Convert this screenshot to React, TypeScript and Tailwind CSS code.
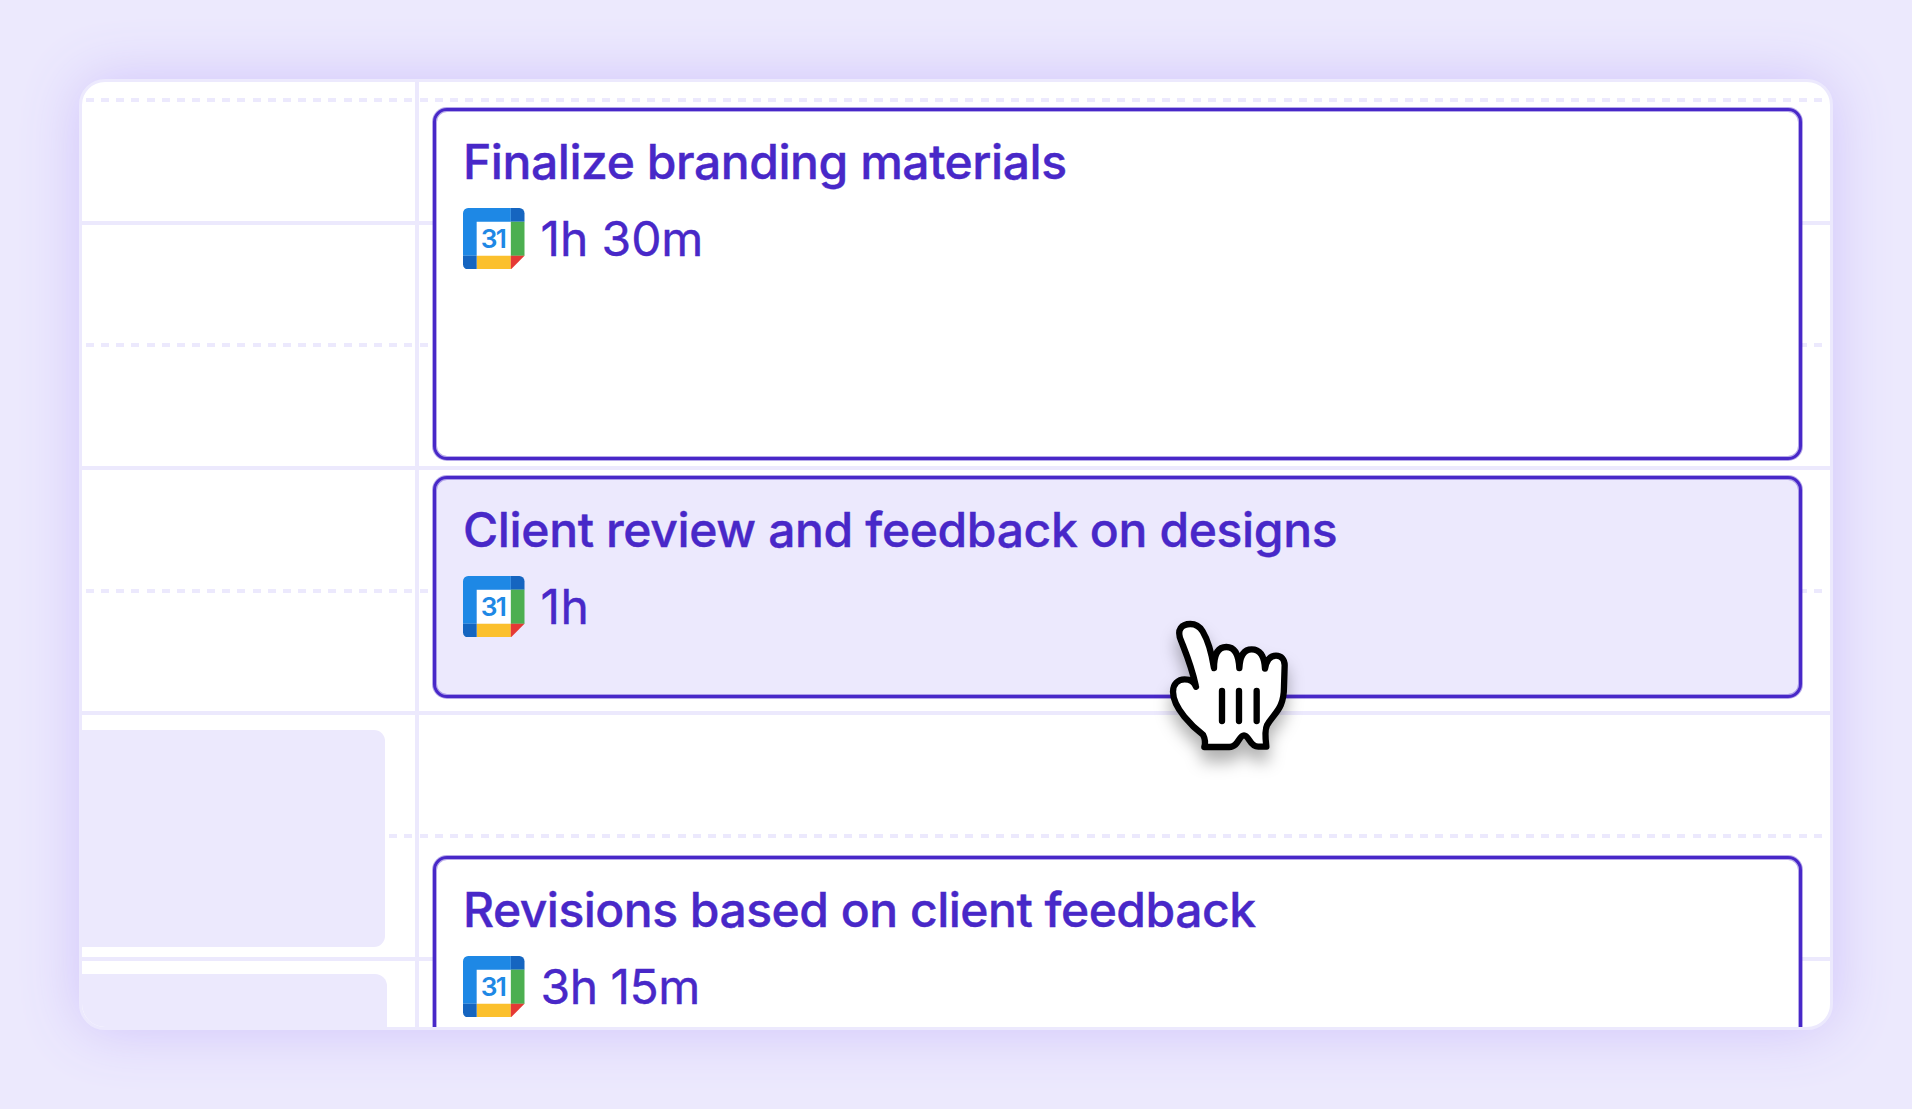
import clsx from "clsx";

type CalendarEvent = {
  title: string;
  duration: string;
  hovered?: boolean;
  box: string;
  tracking: string;
  durationTracking: string;
};

const events: CalendarEvent[] = [
  {
    title: "Finalize branding materials",
    duration: "1h 30m",
    box: "mt-[26px] h-[352px]",
    tracking: "tracking-[-0.44px]",
    durationTracking: "tracking-[-0.1px]",
  },
  {
    title: "Client review and feedback on designs",
    duration: "1h",
    hovered: true,
    box: "mt-[16px] h-[222px]",
    tracking: "tracking-[-0.36px]",
    durationTracking: "tracking-[0.5px]",
  },
  {
    title: "Revisions based on client feedback",
    duration: "3h 15m",
    box: "mt-[158px] h-[300px]",
    tracking: "tracking-[-0.5px]",
    durationTracking: "tracking-[-0.5px]",
  },
];

// Half-hour marks are dashed, full hours are solid
const slots = ["half", "hour", "half", "hour", "half", "hour", "half", "hour"];

function SlotLines({ inset }: { inset: string }) {
  return (
    <div className="[grid-area:1/1] flex flex-col pt-4">
      {slots.map((slot, i) => (
        <div key={i} className="h-[122.7px] shrink-0">
          {slot === "hour" ? (
            <div className="h-1 bg-[#ece9fd]" />
          ) : (
            <div
              className={clsx(
                "h-1 bg-[repeating-linear-gradient(90deg,#ece9fd_0_8px,transparent_8px_15.15px)]",
                inset
              )}
            />
          )}
        </div>
      ))}
    </div>
  );
}

function GoogleCalendarIcon() {
  return (
    <svg viewBox="0 0 36 36" className="size-[61.5px] shrink-0">
      <rect x="8" y="8" width="20" height="20" fill="#fff" />
      <path d="M3 0H28V8H8V28H0V3A3 3 0 0 1 3 0Z" fill="#1e88e5" />
      <path d="M28 0H33A3 3 0 0 1 36 3V8H28Z" fill="#1565c0" />
      <path d="M28 8H36V28H28Z" fill="#4caf50" />
      <path d="M8 28H28V36H8Z" fill="#fbc02d" />
      <path d="M28 28H36L28 36Z" fill="#e53935" />
      <path d="M0 28H8V36H3A3 3 0 0 1 0 33Z" fill="#1565c0" />
      <text
        x="17.6"
        y="23.6"
        textAnchor="middle"
        fill="#1e88e5"
        fontFamily="Inter, sans-serif"
        fontWeight="600"
        fontSize="15.4"
        letterSpacing="-0.9"
      >
        31
      </text>
    </svg>
  );
}

function EventCard({ event }: { event: CalendarEvent }) {
  return (
    <div
      className={clsx(
        "shrink-0 rounded-[14px] border-[3px] border-[#4828c8] pt-[21px] pl-[27px] text-[#4828c8]",
        "shadow-[0_0_0_1px_#4828c866,inset_0_0_0_1px_#4828c866]",
        event.hovered ? "bg-[#ece9fd]" : "bg-white",
        event.box
      )}
    >
      <div
        className={clsx(
          "h-[60px] text-[48px] leading-[60px] font-medium whitespace-nowrap [-webkit-text-stroke:0.4px_#4828c8]",
          event.tracking
        )}
      >
        {event.title}
      </div>
      <div className="mt-[15.5px] flex items-center gap-4">
        <GoogleCalendarIcon />
        <span
          className={clsx(
            "pt-px text-[48px] leading-[60px] whitespace-nowrap [-webkit-text-stroke:0.4px_#4828c8]",
            event.durationTracking
          )}
        >
          {event.duration}
        </span>
      </div>
    </div>
  );
}

function HandCursor() {
  return (
    <svg
      viewBox="0 0 540 570"
      className="absolute top-[600px] left-[1140px] z-20 h-[190px] w-[180px] overflow-visible drop-shadow-[0_12px_8px_rgba(0,0,0,0.3)]"
      stroke="#000"
      strokeWidth="19"
      strokeLinecap="round"
      strokeLinejoin="round"
    >
      <path
        fill="#fff"
        d="M168 260C155 200 140 165 124 124C107 88 127 72 151 72C165 72 178 78 188 94C206 124 215 160 222 204C222 158 238 141 259 141C281 141 296 158 298 204C300 164 314 148 335 148C357 148 373 164 375 206C380 178 392 167 408 167C424 167 434 178 434 196L432 260C432 330 400 340 381 376C374 390 376 415 379 440H355C328 440 328 406 312 406C296 406 296 441 268 441H193C197 428 194 414 189 404C160 382 99 325 99 275C99 252 114 238 134 238C154 238 163 246 168 260Z"
      />
      <path fill="none" d="M246 273V363M297 273V363M350 273V363" />
    </svg>
  );
}

export default function App() {
  return (
    <div className="relative h-[1109px] w-[1912px] overflow-hidden bg-[#ece9fd] p-[79px] font-['Inter',sans-serif]">
      <div className="flex h-[951px] w-[1754px] overflow-hidden rounded-[26px] border-[3px] border-[#ece9fd] bg-white shadow-[0_0_60px_#d0c4fb]">
        {/* Previous day */}
        <div className="grid w-[337px] shrink-0 border-r-4 border-[#ece9fd]">
          <SlotLines inset="ml-1" />
          <div className="z-10 flex flex-col pt-[648px] [grid-area:1/1]">
            <div className="h-[217px] w-[303px] shrink-0 rounded-r-[11px] bg-[#ece9fd]" />
            <div className="mt-[27px] h-[120px] w-[305px] shrink-0 rounded-tr-[12px] bg-[#ece9fd]" />
          </div>
        </div>

        {/* Current day */}
        <div className="grid flex-1">
          <SlotLines inset="ml-px mr-2" />
          <div className="z-10 flex flex-col pr-7 pl-[14px] [grid-area:1/1]">
            {events.map((event) => (
              <EventCard key={event.title} event={event} />
            ))}
          </div>
        </div>
      </div>
      <HandCursor />
    </div>
  );
}
